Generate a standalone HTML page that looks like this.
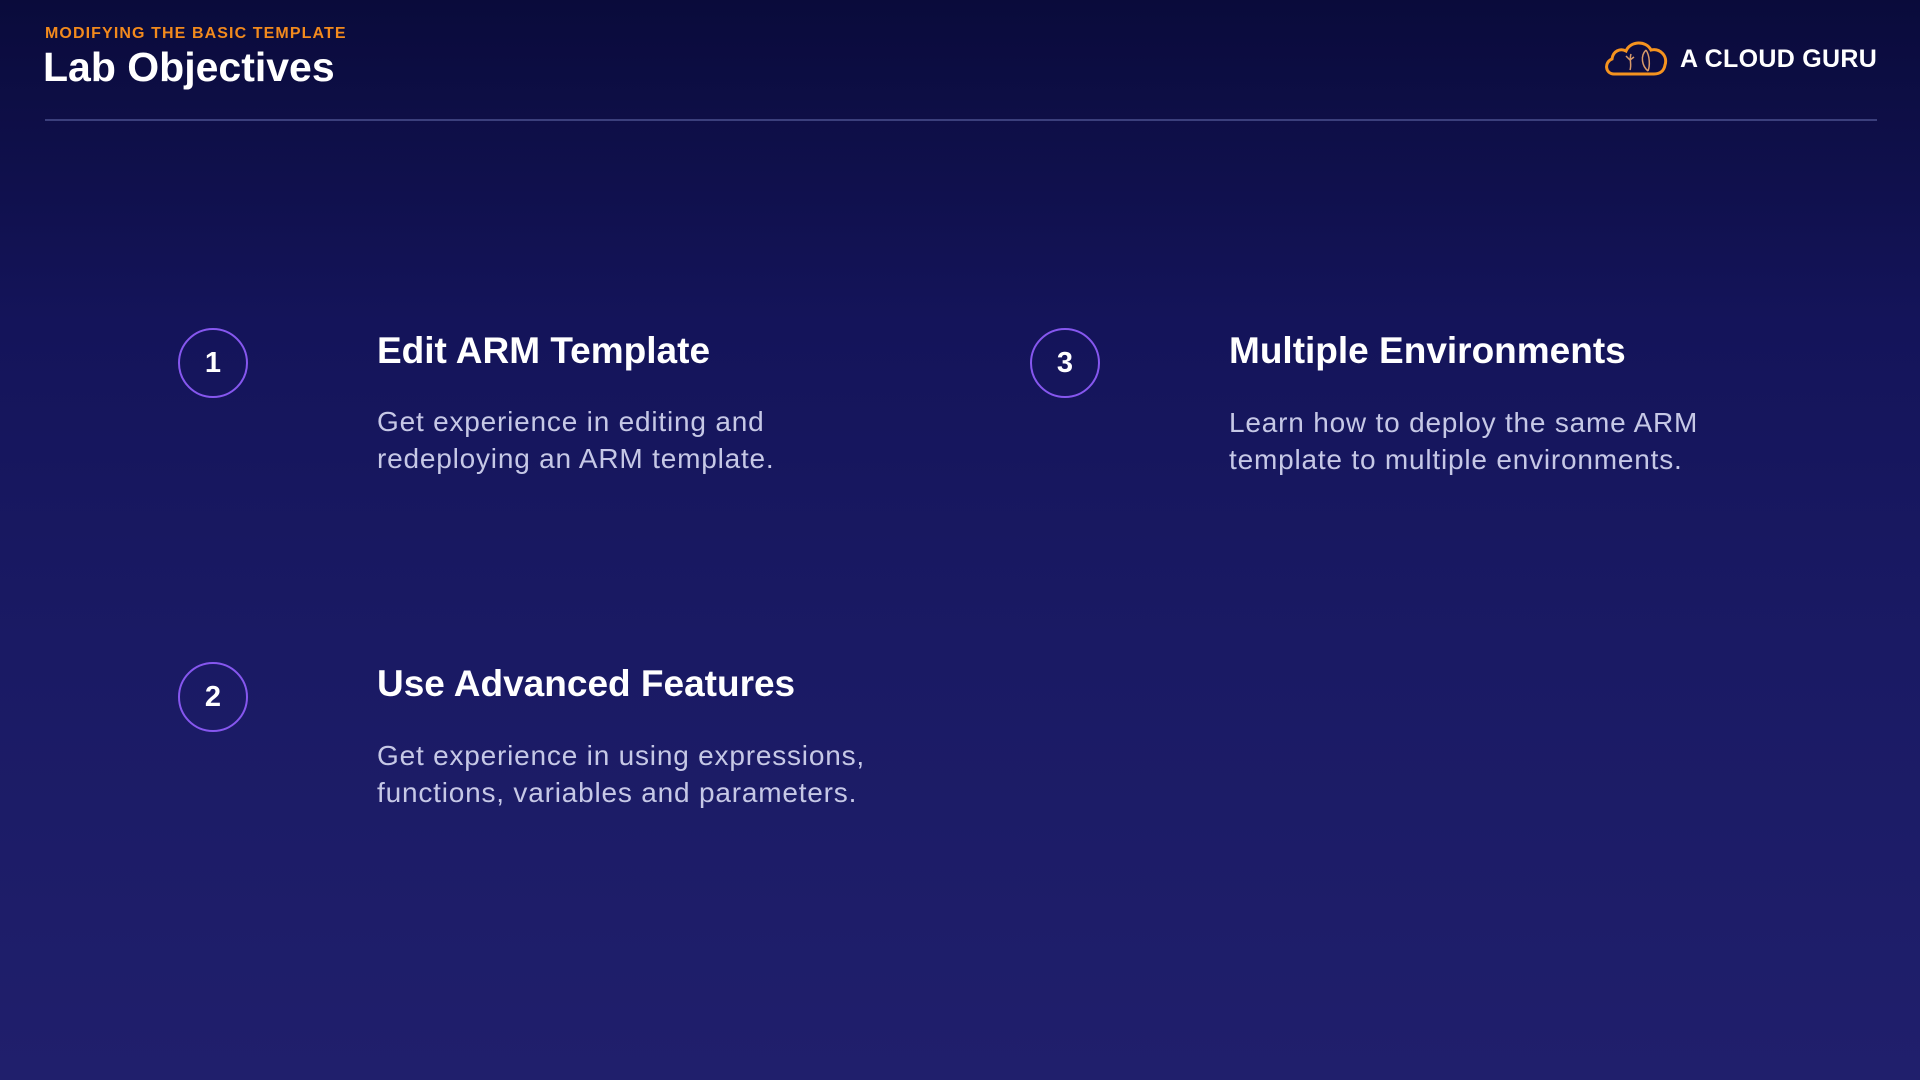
<!DOCTYPE html>
<html><head><meta charset="utf-8"><style>
html,body{margin:0;padding:0}
body{width:1920px;height:1080px;overflow:hidden;position:relative;font-family:"Liberation Sans",sans-serif;
background:linear-gradient(180deg,#0a0b3b 0%,#14145a 30%,#1a1a64 60%,#201f6c 100%);}
.abs{position:absolute;white-space:nowrap}
.sub{left:45px;top:25px;font-size:16px;font-weight:bold;color:#f28a1d;letter-spacing:1.1px}
.title{left:43px;top:44px;font-size:41px;font-weight:bold;color:#fff;letter-spacing:0px}
.line{position:absolute;left:45px;top:119px;width:1832px;height:2px;background:#3b3f7c}
.logo{left:1680px;top:45px;font-size:25px;font-weight:bold;color:#fff;letter-spacing:0.3px}
.circ{position:absolute;width:66px;height:66px;border:2.5px solid #8657ef;border-radius:50%;color:#fff;font-weight:bold;font-size:29px;text-align:center;line-height:66px}
.h{font-size:37px;font-weight:bold;color:#fff}
.p{font-size:28px;color:#c6c8e6;line-height:37px;letter-spacing:0.8px}
</style></head><body>
<div class="abs sub">MODIFYING THE BASIC TEMPLATE</div>
<div class="abs title">Lab Objectives</div>
<div class="line"></div>
<svg class="abs" style="left:1602px;top:38px" width="68" height="40" viewBox="0 0 68 40">
<path d="M12 36 C3 36 2 24 10 21 C11 13 18 10 24 13 C28 3 44 2 49 12 C58 10 66 18 63 27 C62 33 58 36 52 36 Z" fill="none" stroke="#f5931f" stroke-width="3"/>
<path d="M29 16 C27 22 30 26 28 32 M24 18 l4 4 l4 -3" fill="none" stroke="#d89a6a" stroke-width="1.5"/>
<path d="M44 12 C38 18 40 28 46 33 M44 12 C48 18 48 28 46 33" fill="none" stroke="#d89a6a" stroke-width="1.5"/>
</svg>
<div class="abs logo">A CLOUD GURU</div>

<div class="circ" style="left:178px;top:328px">1</div>
<div class="abs h" style="left:377px;top:330px">Edit ARM Template</div>
<div class="abs p" style="left:377px;top:403px">Get experience in editing and<br>redeploying an ARM template.</div>

<div class="circ" style="left:178px;top:662px">2</div>
<div class="abs h" style="left:377px;top:663px">Use Advanced Features</div>
<div class="abs p" style="left:377px;top:737px">Get experience in using expressions,<br>functions, variables and parameters.</div>

<div class="circ" style="left:1030px;top:328px">3</div>
<div class="abs h" style="left:1229px;top:330px">Multiple Environments</div>
<div class="abs p" style="left:1229px;top:404px">Learn how to deploy the same ARM<br>template to multiple environments.</div>
</body></html>
